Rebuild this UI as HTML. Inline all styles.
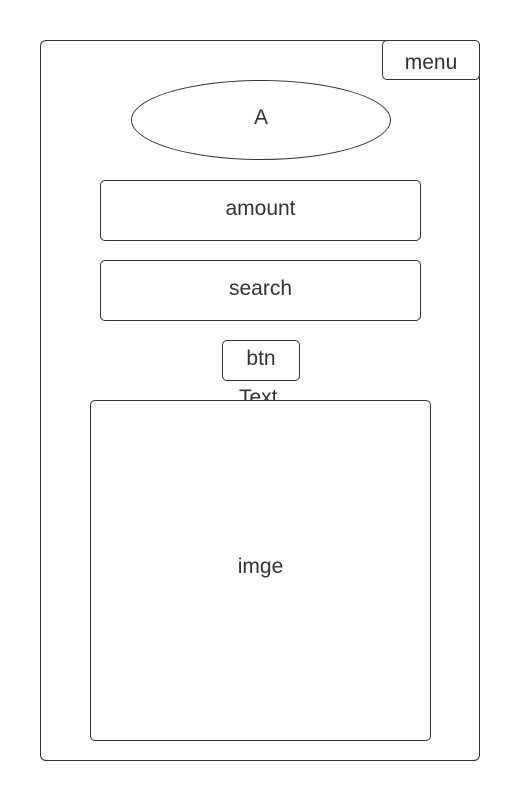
<!DOCTYPE html>
<html><head><style>
body{margin:0;width:520px;height:800px;background:#fff;position:relative;overflow:hidden;font-family:"Liberation Sans",sans-serif;color:#333;font-size:21px}
.b{position:absolute;box-sizing:border-box;border:1px solid #333;border-radius:5px;background:#fff;display:flex;align-items:center;justify-content:center}
.t{position:absolute;}
</style></head><body>
<div class="b" style="left:40px;top:40px;width:440px;height:721px;border-radius:6px"></div>
<div class="b" style="left:382px;top:40px;width:98px;height:40px;padding-top:5px">menu</div>
<div class="b" style="left:131px;top:80px;width:260px;height:80px;border-radius:50%;padding-bottom:4px">A</div>
<div class="b" style="left:100px;top:180px;width:321px;height:61px;padding-bottom:4px">amount</div>
<div class="b" style="left:100px;top:260px;width:321px;height:61px;padding-bottom:4px">search</div>
<div class="b" style="left:222px;top:340px;width:78px;height:41px;padding-bottom:4px">btn</div>
<div class="t" style="left:239px;top:386px">Text</div>
<div class="b" style="left:90px;top:400px;width:341px;height:341px;padding-bottom:8px">imge</div>
</body></html>
